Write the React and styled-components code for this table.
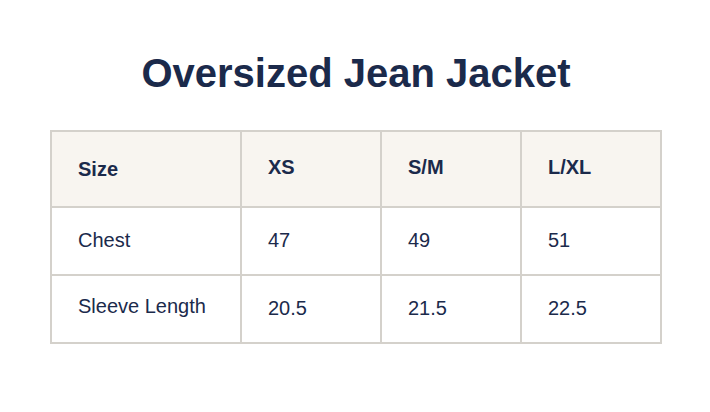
import { Fragment } from "react";
import styled, { createGlobalStyle } from "styled-components";

const GlobalStyle = createGlobalStyle`
  body {
    margin: 0;
    background: #fff;
    font-family: "Liberation Sans", Arial, sans-serif;
    color: #1b2a4b;
  }
`;

const sizeRows = [
  { label: "Chest", values: ["47", "49", "51"], labelTop: 17, valueTop: 17 },
  { label: "Sleeve Length", values: ["20.5", "21.5", "22.5"], labelTop: 15, valueTop: 17 },
];

const App = () => {
  return (
    <>
      <GlobalStyle />
      <Page>
        <Title>Oversized Jean Jacket</Title>
        <SizeTable>
          <HeadCell $top={22}>Size</HeadCell>
          <HeadCell $top={20}>XS</HeadCell>
          <HeadCell $top={20}>S/M</HeadCell>
          <HeadCell $top={20}>L/XL</HeadCell>
          {sizeRows.map((row) => (
            <Fragment key={row.label}>
              <BodyCell $top={row.labelTop}>{row.label}</BodyCell>
              {row.values.map((v) => (
                <BodyCell key={v} $top={row.valueTop}>{v}</BodyCell>
              ))}
            </Fragment>
          ))}
        </SizeTable>
      </Page>
    </>
  );
};

const Page = styled.div`
  width: 710px;
  height: 412px;
  padding: 50px 48px 0 50px;
  box-sizing: border-box;
  display: flex;
  flex-direction: column;
  align-items: center;
`;

const Title = styled.h1`
  margin: 0 0 34px;
  font-size: 40px;
  line-height: 46px;
  font-weight: 700;
  text-align: center;
  color: #1b2a4b;
`;

const SizeTable = styled.div`
  display: grid;
  grid-template-columns: 188px 138px 138px 138px;
  grid-template-rows: 74px 66px 66px;
  gap: 2px;
  padding: 2px;
  background: #d4d1cb;
  width: 612px;
  box-sizing: border-box;
  align-self: flex-start;
`;

const HeadCell = styled.div`
  background: #f8f5f0;
  padding: ${(p) => p.$top}px 0 0 26px;
  font-size: 20px;
  line-height: 30px;
  font-weight: 700;
`;

const BodyCell = styled.div`
  background: #fff;
  padding: ${(p) => p.$top}px 0 0 26px;
  font-size: 20px;
  line-height: 30px;
`;

export default App;
